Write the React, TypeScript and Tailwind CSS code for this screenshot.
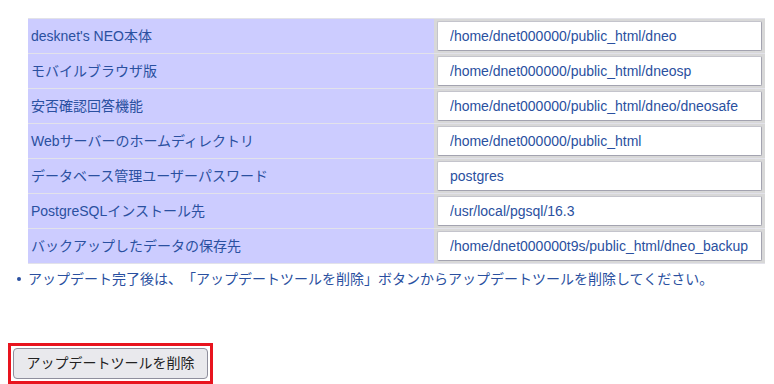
const rows = [
  { label: "desknet's NEO本体", value: "/home/dnet000000/public_html/dneo" },
  { label: "モバイルブラウザ版", value: "/home/dnet000000/public_html/dneosp" },
  { label: "安否確認回答機能", value: "/home/dnet000000/public_html/dneo/dneosafe" },
  { label: "Webサーバーのホームディレクトリ", value: "/home/dnet000000/public_html" },
  { label: "データベース管理ユーザーパスワード", value: "postgres" },
  { label: "PostgreSQLインストール先", value: "/usr/local/pgsql/16.3" },
  { label: "バックアップしたデータの保存先", value: "/home/dnet000000t9s/public_html/dneo_backup" },
];

const font = {
  fontFamily: '"Liberation Sans", Arial, "Noto Sans CJK JP", sans-serif',
};

export default function App() {
  return (
    <div
      className="min-h-[384px] w-[774px] bg-white text-[14px] [text-spacing-trim:space-all]"
      style={font}
    >
      <div className="pl-[28px] pt-[18px]">
        <div className="flex w-[737px] flex-col border-t border-[#e2e2e8]">
          {rows.map((r) => (
            <div key={r.label} className="flex h-[35px] border-b border-[#e2e2ea]">
              <div className="flex w-[406px] items-center bg-[#ccccff] pl-[3px] text-[#2a50a0]">
                {r.label}
              </div>
              <div className="flex flex-1 items-center bg-[#d8d8d8] px-[3px]">
                <input
                  readOnly
                  value={r.value}
                  className="h-[30px] w-full rounded-[2px] border border-[#a3a3b0] border-t-[#c4c4cc] border-l-[#c4c4cc] bg-white pl-[12px] text-[14px] text-[#2a50a0] outline-none"
                  style={font}
                />
              </div>
            </div>
          ))}
        </div>
      </div>
      {/* note */}
      <div className="mt-[4px] flex items-center pl-[17px] leading-[22px] text-[#2a50a0]">
        <span className="mr-[7px] h-[4px] w-[4px] rounded-full bg-[#2a50a0]" />
        <span>
          アップデート完了後は、「アップデートツールを削除」ボタンからアップデートツールを削除してください。
        </span>
      </div>
      <div className="ml-[8px] mt-[53px] inline-block border-[3px] border-[#e8141e] p-[2px]">
        <button
          type="button"
          className="h-[31px] w-[195px] rounded-[4px] border border-[#8f8f9d] bg-[#e9e9ed] text-[14px] text-[#222]"
          style={font}
        >
          アップデートツールを削除
        </button>
      </div>
    </div>
  );
}
